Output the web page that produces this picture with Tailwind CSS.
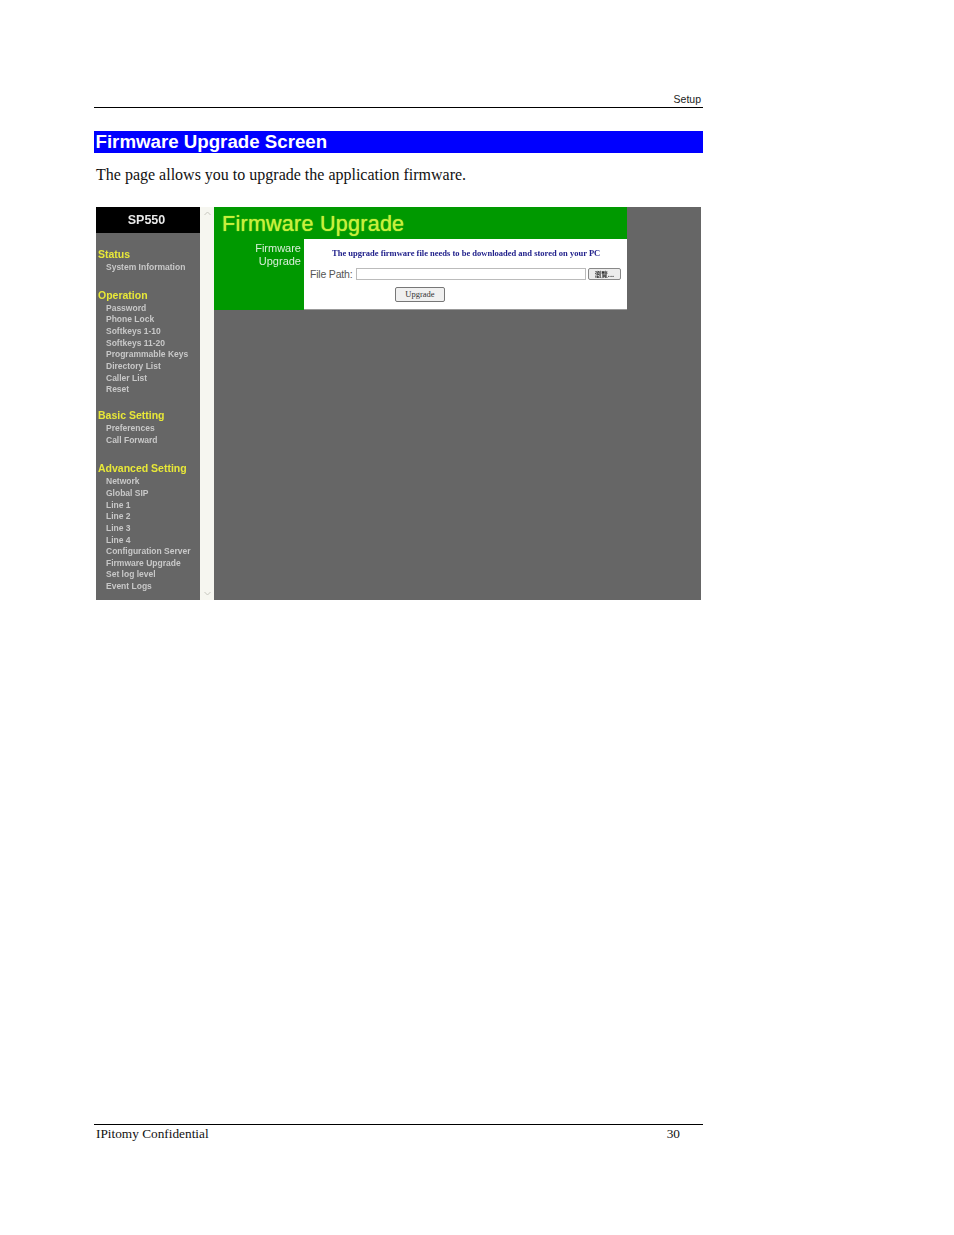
<!DOCTYPE html>
<html lang="en">
  <head>
    <meta charset="UTF-8" />
    <title>Firmware Upgrade Screen</title>
    <script src="https://cdn.jsdelivr.net/npm/@tailwindcss/browser@4"></script>
  </head>
  <body class="bg-white">
    <div class="relative h-[1235px] w-[954px] overflow-hidden bg-white pl-[94px] pr-[251px] pt-[93px] font-['Liberation_Serif',serif] text-black">
      <!-- page header -->
      <div class="h-[15px] border-b border-black pr-[2px] text-right font-['Liberation_Sans',sans-serif] text-[10.5px] leading-[13px] text-[#222]">Setup</div>

      <h1 class="mt-[23px] h-[22px] bg-[#0000ff] pl-[1.5px] font-['Liberation_Sans',sans-serif] text-[18.7px] font-bold leading-[22px] text-white">Firmware Upgrade Screen</h1>
      <p class="mt-[12px] pl-[2px] text-[16px] leading-[20px] text-[#111]">The page allows you to upgrade the application firmware.</p>

      <!-- screenshot of the phone's web ui -->
      <div class="ml-[2px] mt-[22px] flex h-[393px] w-[605px] bg-[#666666]">
        <aside class="flex w-[104px] shrink-0 flex-col font-['Liberation_Sans',sans-serif] text-[8.5px] font-bold leading-[11.65px] text-[#c8c8c8] blur-[0.4px]">
          <div class="flex h-[26px] items-center justify-center bg-black pr-[3px] pt-[1px] text-[12.5px] text-[#e8e8e8]">SP550</div>

          <h2 class="mt-[15px] pb-[1px] pl-[2px] text-[10.5px] leading-[13px] text-[#e8e838]">Status</h2>
          <ul class="pl-[10px]">
            <li>System Information</li>
          </ul>

          <h2 class="mt-[15px] pb-[1px] pl-[2px] text-[10.5px] leading-[13px] text-[#e8e838]">Operation</h2>
          <ul class="pl-[10px]">
            <li>Password</li>
            <li>Phone Lock</li>
            <li>Softkeys 1-10</li>
            <li>Softkeys 11-20</li>
            <li>Programmable Keys</li>
            <li>Directory List</li>
            <li>Caller List</li>
            <li>Reset</li>
          </ul>

          <h2 class="mt-[13.5px] pb-[1px] pl-[2px] text-[10.5px] leading-[13px] text-[#e8e838]">Basic Setting</h2>
          <ul class="pl-[10px]">
            <li>Preferences</li>
            <li>Call Forward</li>
          </ul>

          <h2 class="mt-[15.5px] pb-[1px] pl-[2px] text-[10.5px] leading-[13px] text-[#e8e838]">Advanced Setting</h2>
          <ul class="pl-[10px]">
            <li>Network</li>
            <li>Global SIP</li>
            <li>Line 1</li>
            <li>Line 2</li>
            <li>Line 3</li>
            <li>Line 4</li>
            <li>Configuration Server</li>
            <li>Firmware Upgrade</li>
            <li>Set log level</li>
            <li>Event Logs</li>
          </ul>
        </aside>

        <!-- scrollbar -->
        <div class="flex w-[14px] shrink-0 flex-col items-center justify-between bg-[#f6f6f0] py-[2px] text-[#c8c8c0]">
          <svg class="h-[9px] w-[9px]" viewBox="0 0 9 9" fill="none" stroke="currentColor"><path d="M1.5 6 4.5 3l3 3" /></svg>
          <svg class="h-[9px] w-[9px]" viewBox="0 0 9 9" fill="none" stroke="currentColor"><path d="M1.5 3l3 3 3-3" /></svg>
        </div>

        <main class="h-[103px] w-[413px] shrink-0 bg-[#009900] font-['Liberation_Sans',sans-serif]">
          <div class="h-[32px] pl-[8px] pt-[4px] text-[21.5px] leading-[26px] tracking-[0.27px] text-[#c8f03c] [text-shadow:0_0_1px_#c8f03c]">Firmware Upgrade</div>
          <div class="flex h-[71px]">
            <div class="w-[90px] pr-[3px] pt-[3px] text-right text-[11px] leading-[12.5px] text-[#d8eed8] blur-[0.3px]">Firmware<br />Upgrade</div>
            <div class="flex-1 border-b border-[#999] bg-white text-[#555]">
              <p class="pl-[28px] pt-[9px] font-['Liberation_Serif',serif] text-[8.5px] font-bold leading-[11px] text-[#22228c] blur-[0.3px]">The upgrade firmware file needs to be downloaded and stored on your PC</p>
              <div class="mt-[9px] flex items-center pl-[6px] text-[10.5px] leading-[12px]">
                <span class="w-[46px] tracking-[-0.2px]">File Path:</span>
                <div class="h-[12px] w-[230px] border border-[#bbb] bg-white"></div>
                <div class="ml-[2px] flex h-[12px] w-[33px] items-center justify-center rounded-[2px] border border-[#888] bg-[#ececec] font-['Noto_Sans_CJK_TC',sans-serif] text-[6.5px] leading-[6px] font-bold text-[#333] blur-[0.3px]">瀏覽...</div>
              </div>
              <div class="ml-[91px] mt-[7px] flex h-[15px] w-[50px] items-center justify-center rounded-[2px] border border-[#777] bg-[#f0f0f0] font-['Liberation_Serif',serif] text-[8.5px] text-[#333]">Upgrade</div>
            </div>
          </div>
        </main>
      </div>

      <!-- page footer -->
      <div class="absolute left-[94px] top-[1124px] flex h-[20px] w-[609px] justify-between border-t border-black pl-[2px] pr-[23px] text-[13.3px] leading-[17px] text-[#111]">
        <span>IPitomy Confidential</span>
        <span>30</span>
      </div>
    </div>
  </body>
</html>
